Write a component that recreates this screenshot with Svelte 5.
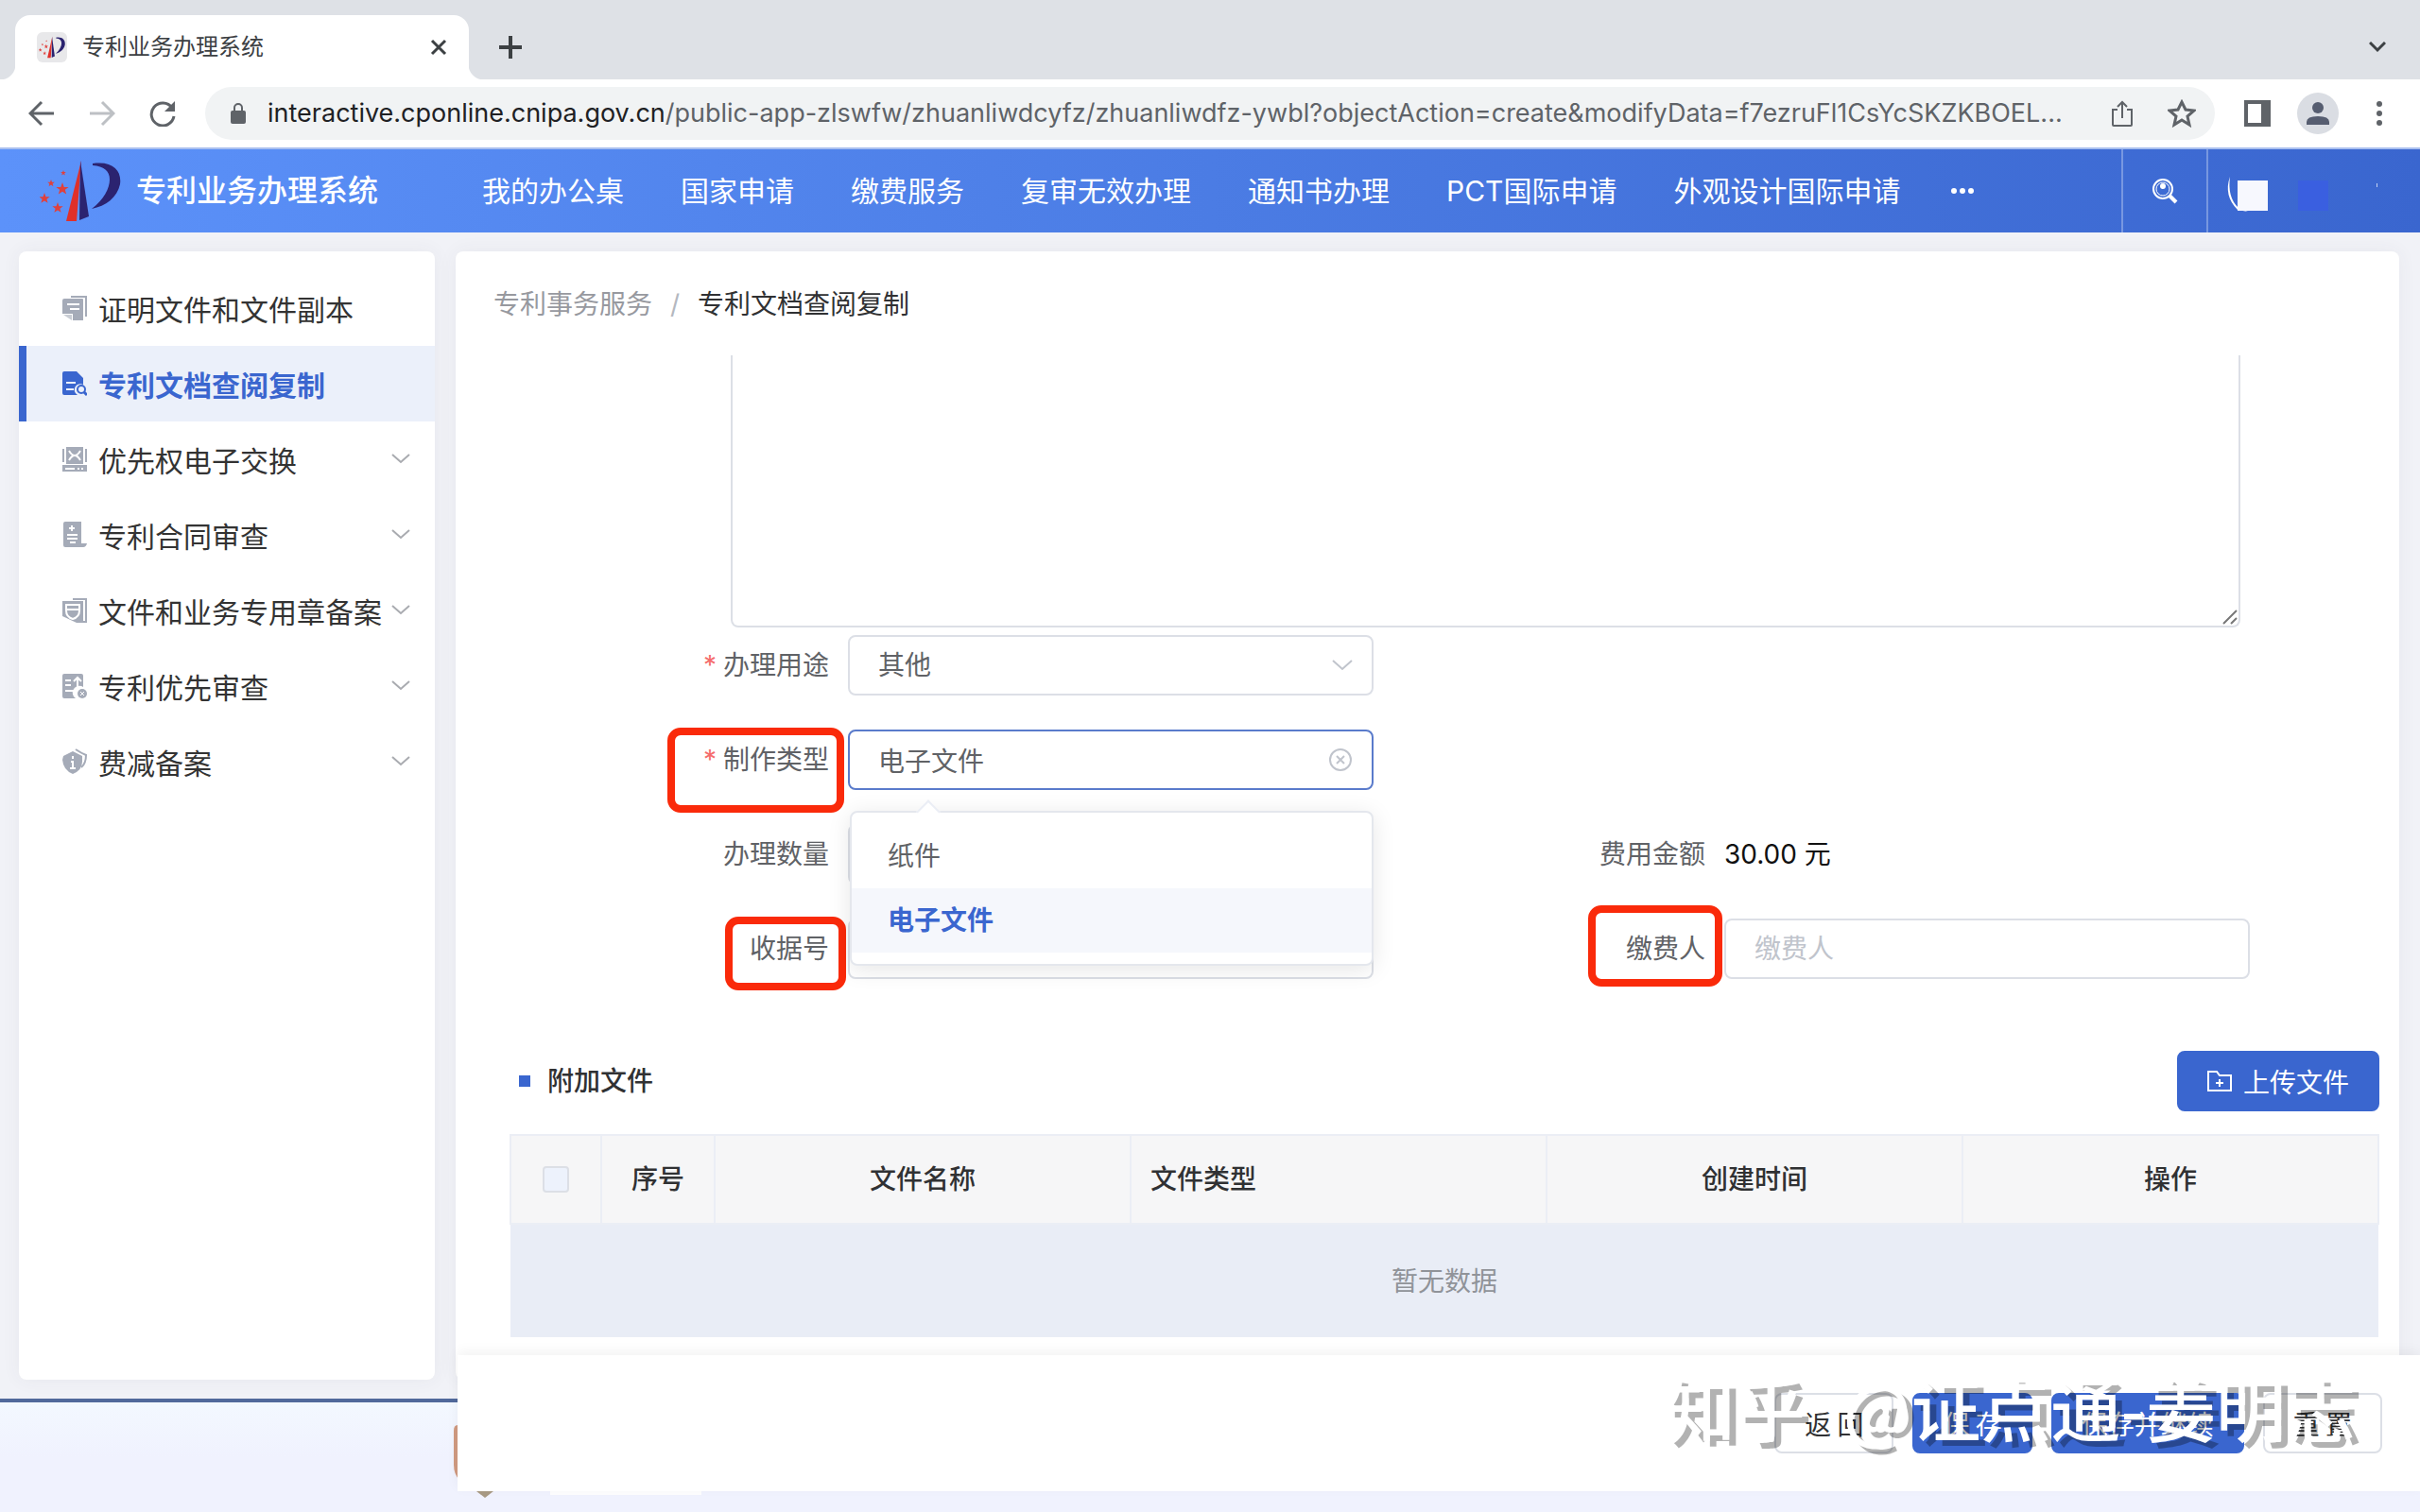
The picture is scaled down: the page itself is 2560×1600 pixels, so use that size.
<script>
  const navItems = [
    "我的办公桌",
    "国家申请",
    "缴费服务",
    "复审无效办理",
    "通知书办理",
    "PCT国际申请",
    "外观设计国际申请",
  ];

  const menuItems = [
    { icon: "copies", label: "证明文件和文件副本", children: false },
    { icon: "search", label: "专利文档查阅复制", children: false },
    { icon: "exchange", label: "优先权电子交换", children: true },
    { icon: "contract", label: "专利合同审查", children: true },
    { icon: "seal", label: "文件和业务专用章备案", children: true },
    { icon: "priority", label: "专利优先审查", children: true },
    { icon: "fee", label: "费减备案", children: true },
  ];

  const makeTypes = ["纸件", "电子文件"];

  // centre x, centre y, scale of each star in the emblem
  const stars = [
    [5, 42, 6],
    [24, 32, 7],
    [19, 52, 6],
    [12, 26, 4],
    [25, 15, 3],
  ];

  let activeMenu = $state("专利文档查阅复制");
  let remark = $state("");
  let purpose = $state("其他");
  let makeType = $state("电子文件");
  let dropdownOpen = $state(true);
  let quantity = $state("1");
  let receiptNo = $state("");
  let payer = $state("");

  function pickType(type) {
    makeType = type;
    dropdownOpen = false;
  }
</script>

{#snippet emblem()}
  <path d="M44 2 L28 66 L39 66 Z" fill="#e0302a" />
  <path d="M43 2 L42 65 L52 61 Z" fill="#2b2370" />
  <path d="M56 5 C78 2 87 13 85 27 C82 41 70 50 55 53 C68 43 74 31 74 22 C74 13 68 8 56 7 Z" fill="#2b2370" />
  {#each stars as [x, y, size]}
    <path transform="translate({x} {y}) scale({size})" d="M0-1L.25-.3.95-.3.4.12.6.8 0 .4-.6.8-.4.12-.95-.3-.25-.3z" fill="#e0403c" />
  {/each}
{/snippet}

{#snippet menuIcon(name)}
  <svg class="menu-icon" viewBox="0 0 26 28" aria-hidden="true">
    {#if name === "copies"}
      <path d="M9 1h17v22h-2V3H9z" fill="currentColor" />
      <path d="M2 4h19a1 1 0 0 1 1 1v22H11V20H0V6a2 2 0 0 1 2-2z" fill="currentColor" />
      <path d="M1 21l9 6v-6z" fill="currentColor" opacity="0.6" />
      <path d="M5 10h13M8 15h10" stroke="#fff" stroke-width="2" />
    {:else if name === "search"}
      <path d="M2 1h13l7 7v7a6 6 0 0 0-6 11H2a2 2 0 0 1-2-2V3a2 2 0 0 1 2-2z" fill="currentColor" />
      <path d="M4 13h10M4 20h8" stroke="#ebf0fa" stroke-width="2" />
      <circle cx="20" cy="20" r="4" fill="#ebf0fa" stroke="currentColor" stroke-width="2" />
      <path d="M23 23l3 3" stroke="currentColor" stroke-width="3" />
    {:else if name === "exchange"}
      <path d="M4 1h18v18H4z" fill="currentColor" />
      <path d="M1 3v14M25 3v14" stroke="currentColor" stroke-width="2" />
      <path d="M7 5q6 10 12 0M7 15q6-10 12 0" stroke="#fff" stroke-width="2" fill="none" />
      <path d="M0 20h26v7H0z" fill="currentColor" />
      <path d="M3 24h10M16 24h2M20 24h2" stroke="#fff" stroke-width="2" />
    {:else if name === "contract"}
      <path d="M3 0h17v23h6q-1 4-4 4H3a2 2 0 0 1-2-2V2a2 2 0 0 1 2-2z" fill="currentColor" />
      <path d="M10 4v6M7 7h6M5 14h11M5 18h11M8 22h6" stroke="#fff" stroke-width="2" />
    {:else if name === "seal"}
      <path d="M11 1h15v26h-5v-2h3V3H11z" fill="currentColor" />
      <path d="M0 4h22v23h-7L0 20z" fill="currentColor" />
      <path d="M4 8h14v6q0 7-7 9-7-2-7-9zM5 13h12" stroke="#fff" stroke-width="2" fill="none" />
    {:else if name === "priority"}
      <path d="M2 1h18a2 2 0 0 1 2 2v12a7 7 0 0 0-8 12H2a2 2 0 0 1-2-2V3a2 2 0 0 1 2-2z" fill="currentColor" />
      <path d="M3 8h6M3 13h6M3 19h9M16 15V5M12 9l4-4 4 4" stroke="#fff" stroke-width="2" fill="none" />
      <circle cx="21" cy="22" r="5" fill="currentColor" />
      <path d="M19 20l4 4M23 20l-4 4" stroke="#fff" />
    {:else}
      <path d="M11 3l10 5v6q0 9-10 13Q1 23 0 12l1-4z" fill="currentColor" />
      <path d="M14 1q6 4 11 6 0 9-5 13" stroke="currentColor" stroke-width="2" fill="none" />
      <path d="M11 8v3M11 13v8M9 14h2M8 21h6" stroke="#fff" stroke-width="2" />
    {/if}
  </svg>
{/snippet}

<div class="window">
  <div class="tab-strip">
    <div class="tab">
      <svg class="favicon" viewBox="0 0 32 32" aria-hidden="true">
        <rect width="32" height="32" rx="6" fill="#e8e8ea" />
        <svg x="2" y="4" width="28" height="24" viewBox="0 0 86 68" preserveAspectRatio="none">{@render emblem()}</svg>
      </svg>
      <span class="tab-title">专利业务办理系统</span>
      <button class="plain" aria-label="关闭标签页">
        <svg width="18" height="18" viewBox="0 0 18 18"><path d="M2 2l14 14M16 2L2 16" stroke="#3c4043" stroke-width="3" /></svg>
      </button>
    </div>
    <button class="plain new-tab" aria-label="新标签页">
      <svg width="24" height="24" viewBox="0 0 24 24"><path d="M12 0v24M0 12h24" stroke="#3c4043" stroke-width="4" /></svg>
    </button>
    <button class="plain tab-search" aria-label="搜索标签页">
      <svg width="18" height="12" viewBox="0 0 18 12"><path d="M1 1l8 8 8-8" stroke="#3c4043" stroke-width="3" fill="none" /></svg>
    </button>
  </div>

  <div class="toolbar">
    <div class="nav-buttons">
      <button class="plain" aria-label="后退">
        <svg width="28" height="28" viewBox="0 0 28 28"><path d="M27 14H3M14 2L2 14l12 12" stroke="#5f6368" stroke-width="3" fill="none" /></svg>
      </button>
      <button class="plain" aria-label="前进">
        <svg width="28" height="28" viewBox="0 0 28 28"><path d="M1 14h24M14 2l12 12-12 12" stroke="#bdc0c4" stroke-width="3" fill="none" /></svg>
      </button>
      <button class="plain" aria-label="重新加载">
        <svg width="28" height="28" viewBox="0 0 28 28">
          <path d="M24 8A12 12 0 1 0 26 17" stroke="#5f6368" stroke-width="3" fill="none" />
          <path d="M27 1v11H16z" fill="#5f6368" />
        </svg>
      </button>
    </div>
    <div class="omnibox">
      <svg width="18" height="24" viewBox="0 0 18 24" aria-hidden="true">
        <rect x="1" y="9" width="16" height="14" rx="2" fill="#5f6368" />
        <path d="M5 10V6a4 4 0 0 1 8 0v4" stroke="#5f6368" stroke-width="2" fill="none" />
      </svg>
      <span class="url"><b>interactive.cponline.cnipa.gov.cn</b>/public-app-zlswfw/zhuanliwdcyfz/zhuanliwdfz-ywbl?objectAction=create&modifyData=f7ezruFl1CsYcSKZKBOEL...</span>
      <button class="plain" aria-label="分享">
        <svg width="24" height="30" viewBox="0 0 24 30">
          <path d="M7 11H2v16q0 1 1 1h18q1 0 1-1V11h-5M12 20V3M7 8l5-5 5 5" stroke="#5f6368" stroke-width="2" fill="none" />
        </svg>
      </button>
      <button class="plain" aria-label="添加书签">
        <svg width="30" height="30" viewBox="0 0 30 30">
          <path d="M15 3l4 8 9 1-7 6 2 9-8-5-8 5 2-9-7-6 9-1z" stroke="#5f6368" stroke-width="3" fill="none" />
        </svg>
      </button>
    </div>
    <div class="tools">
      <button class="plain" aria-label="侧边栏">
        <svg width="28" height="28" viewBox="0 0 28 28"><path d="M0 0h28v28H0zM4 4v20h14V4z" fill="#5f6368" fill-rule="evenodd" /></svg>
      </button>
      <button class="plain" aria-label="个人资料">
        <svg width="44" height="44" viewBox="0 0 44 44">
          <circle cx="22" cy="22" r="22" fill="#dadde3" />
          <circle cx="22" cy="16" r="6" fill="#565d70" />
          <path d="M10 34v-3q0-6 12-6t12 6v3z" fill="#565d70" />
        </svg>
      </button>
      <button class="plain" aria-label="更多">
        <svg width="6" height="28" viewBox="0 0 6 28"><g fill="#5f6368"><circle cx="3" cy="4" r="3" /><circle cx="3" cy="14" r="3" /><circle cx="3" cy="24" r="3" /></g></svg>
      </button>
    </div>
  </div>

  <header class="site-header">
    <svg class="logo" viewBox="0 0 86 68" aria-hidden="true">{@render emblem()}</svg>
    <span class="site-name">专利业务办理系统</span>
    <nav>
      {#each navItems as item}
        <a href="#nav">{item}</a>
      {/each}
      <button class="plain" aria-label="更多菜单">
        <svg width="28" height="8" viewBox="0 0 28 8"><g fill="#fff"><circle cx="5" cy="4" r="3" /><circle cx="14" cy="4" r="3" /><circle cx="23" cy="4" r="3" /></g></svg>
      </button>
    </nav>
    <button class="plain header-search" aria-label="搜索">
      <svg width="30" height="30" viewBox="0 0 30 30">
        <circle cx="13" cy="13" r="10" stroke="#fff" stroke-width="2" fill="none" />
        <circle cx="13" cy="13" r="7" stroke="#fff" fill="none" />
        <circle cx="13" cy="10" r="3" fill="#fff" />
        <path d="M20 20l7 7" stroke="#fff" stroke-width="4" />
      </svg>
    </button>
    <div class="account">
      <svg width="180" height="46" viewBox="0 0 180 46" aria-hidden="true">
        <path d="M9 8Q2 28 17 43L28 45L18 41Q6 30 9 8z" fill="#fff" />
        <rect x="17" y="12" width="32" height="32" fill="#f7f8fe" />
        <rect x="81" y="12" width="32" height="32" fill="#3a5fe0" />
        <rect x="164" y="15" width="1" height="4" fill="#c5d2f2" />
      </svg>
    </div>
  </header>

  <div class="body">
    <aside>
      {#each menuItems as item}
        <button class="menu-item" class:active={activeMenu === item.label} onclick={() => (activeMenu = item.label)}>
          {@render menuIcon(item.icon)}
          <span class="menu-label">{item.label}</span>
          {#if item.children}
            <svg class="chevron" width="20" height="12" viewBox="0 0 20 12"><path d="M1 1l9 8 9-8" stroke="#a9abb0" stroke-width="2" fill="none" /></svg>
          {/if}
        </button>
      {/each}
    </aside>

    <main>
      <div class="breadcrumb">
        <a href="#service">专利事务服务</a>
        <span class="slash">/</span>
        <span>专利文档查阅复制</span>
      </div>

      <div class="remark">
        <textarea bind:value={remark} aria-label="备注"></textarea>
        <svg class="grip" width="16" height="16" viewBox="0 0 16 16"><path d="M1 15L15 1M9 15l6-6" stroke="#777" stroke-width="2" /></svg>
      </div>

      <form class="form" onsubmit={(e) => e.preventDefault()}>
        <label class="label" for="purpose"><span class="required">办理用途</span></label>
        <div class="control">
          <select id="purpose" bind:value={purpose}>
            <option>其他</option>
          </select>
          <svg class="suffix" width="22" height="22" viewBox="0 0 22 22"><path d="M1 6l10 9 10-9" stroke="#c0c4cc" stroke-width="2" fill="none" /></svg>
        </div>
        <span></span>
        <span></span>

        <label class="label" for="make-type"><span class="required">制作类型<i class="mark mark-type"></i></span></label>
        <div class="control">
          <input id="make-type" class="focused" type="text" readonly value={makeType} onclick={() => (dropdownOpen = !dropdownOpen)} />
          <button type="button" class="plain suffix" aria-label="清空" onclick={() => (makeType = "")}>
            <svg width="26" height="26" viewBox="0 0 26 26"><g stroke="#c0c4cc" stroke-width="2" fill="none"><circle cx="13" cy="13" r="11" /><path d="M9 9l8 8M17 9l-8 8" /></g></svg>
          </button>
          {#if dropdownOpen}
            <div class="dropdown">
              {#each makeTypes as type}
                <button type="button" class:selected={makeType === type} onclick={() => pickType(type)}>{type}</button>
              {/each}
            </div>
          {/if}
        </div>
        <span></span>
        <span></span>

        <label class="label" for="quantity">办理数量</label>
        <div class="control"><input id="quantity" type="text" bind:value={quantity} /></div>
        <span class="label">费用金额</span>
        <span class="amount">30.00 元</span>

        <label class="label" for="receipt"><span>收据号<i class="mark mark-receipt"></i></span></label>
        <div class="control"><input id="receipt" type="text" bind:value={receiptNo} /></div>
        <label class="label" for="payer"><span>缴费人<i class="mark mark-payer"></i></span></label>
        <div class="control"><input id="payer" type="text" placeholder="缴费人" bind:value={payer} /></div>
      </form>

      <section class="files">
        <div class="files-head">
          <h2>附加文件</h2>
          <button class="btn primary upload">
            <svg width="26" height="24" viewBox="0 0 26 24"><path d="M1 2h9l3 4h12v16H1zM13 10v8M9 14h8" stroke="#fff" stroke-width="2" fill="none" /></svg>
            上传文件
          </button>
        </div>
        <table>
          <thead>
            <tr>
              <th class="check"><input type="checkbox" aria-label="全选" /></th>
              <th class="index">序号</th>
              <th>文件名称</th>
              <th class="left">文件类型</th>
              <th>创建时间</th>
              <th>操作</th>
            </tr>
          </thead>
          <tbody>
            <tr><td colspan="6">暂无数据</td></tr>
          </tbody>
        </table>
      </section>
    </main>
  </div>

  <footer class="site-footer">
    <svg width="270" height="86" viewBox="0 0 270 86" aria-hidden="true">
      <path d="M12 8Q8 8 8 14V50Q8 60 14 66V8z" fill="#d09a80" />
      <path d="M32 78h18l-9 7z" fill="#a89a84" />
      <rect x="110" y="70" width="160" height="12" fill="#fdfdfe" />
    </svg>
  </footer>

  <div class="actions">
    <button class="btn">返 回</button>
    <button class="btn primary">保 存</button>
    <button class="btn primary">保存并继续</button>
    <button class="btn">重 置</button>
    <div class="watermark"><span>知乎</span><span>@证点通-姜明志</span></div>
  </div>
</div>

<style>
  :global(body) {
    margin: 0;
    background: #f1f2f7;
  }

  .window {
    position: relative;
    display: flex;
    flex-direction: column;
    min-height: 100vh;
    font-family: Inter, "Noto Sans CJK SC", sans-serif;
    font-size: 28px;
    line-height: 40px;
    color: #606266;
  }

  .window * { box-sizing: border-box; }

  button, input, select, textarea {
    font: inherit;
    color: inherit;
  }

  button { cursor: pointer; }
  svg { display: block; flex: none; }
  a { color: inherit; text-decoration: none; }

  .plain {
    display: flex;
    padding: 0;
    border: 0;
    background: none;
  }

  /* browser chrome */
  .tab-strip {
    display: flex;
    align-items: center;
    height: 84px;
    padding: 16px 36px 0 16px;
    background: #dee1e6;
  }

  .tab {
    position: relative;
    display: flex;
    align-items: center;
    gap: 16px;
    width: 480px;
    height: 68px;
    padding: 0 23px;
    border-radius: 16px 16px 0 0;
    background: #fff;
  }

  .tab::before, .tab::after {
    content: "";
    position: absolute;
    bottom: 0;
    width: 16px;
    height: 16px;
  }

  .tab::before {
    right: 100%;
    background: radial-gradient(circle at 0 0, #dee1e6 16px, #fff 17px);
  }

  .tab::after {
    left: 100%;
    background: radial-gradient(circle at 100% 0, #dee1e6 16px, #fff 17px);
  }

  .favicon {
    width: 32px;
    height: 32px;
  }

  .tab-title {
    flex: 1;
    font-size: 24px;
    color: #3c4043;
  }

  .new-tab { margin-left: 32px; }
  .tab-search { margin-left: auto; }

  .toolbar {
    display: flex;
    align-items: center;
    height: 74px;
    padding: 0 40px 0 30px;
    border-bottom: 2px solid #a9bfef;
    background: #fff;
  }

  .nav-buttons {
    display: flex;
    gap: 36px;
    width: 187px;
  }

  .omnibox {
    display: flex;
    flex: 1;
    align-items: center;
    min-width: 0;
    height: 56px;
    padding: 0 20px 0 26px;
    border-radius: 28px;
    background: #f1f3f4;
  }

  .url {
    flex: 1;
    overflow: hidden;
    padding-left: 22px;
    font-size: 27px;
    white-space: nowrap;
    color: #5f6368;
  }

  .url b {
    font-weight: 400;
    color: #202124;
  }

  .omnibox button { margin-left: 36px; }

  .tools {
    display: flex;
    align-items: center;
    gap: 28px;
    margin-left: 31px;
  }

  .tools button:last-child { margin-left: 12px; }

  /* site header */
  .site-header {
    display: flex;
    align-items: center;
    height: 88px;
    padding-left: 42px;
    background: linear-gradient(90deg, #5c92fa, #4b7ce4 50%, #3a66cf);
    color: #fff;
  }

  .logo {
    width: 86px;
    height: 68px;
  }

  .site-name {
    margin-left: 16px;
    font-size: 32px;
    font-weight: 500;
  }

  nav {
    display: flex;
    flex: 1;
    align-items: center;
    gap: 60px;
    margin-left: 110px;
    font-size: 30px;
    white-space: nowrap;
  }

  nav button { margin-left: -8px; }

  .header-search {
    align-items: center;
    justify-content: center;
    width: 92px;
    height: 100%;
    border: solid rgba(255, 255, 255, 0.3);
    border-width: 0 2px;
  }

  .account {
    width: 224px;
    padding: 0 14px;
  }

  /* layout */
  .body {
    display: grid;
    flex: 1;
    grid-template-columns: 440px 1fr;
    gap: 22px;
    padding: 20px 22px 20px 20px;
  }

  aside, main {
    min-width: 0;
    border-radius: 8px;
    background: #fff;
    box-shadow: 0 0 20px rgba(60, 60, 90, 0.06);
  }

  aside { padding: 20px 0; }

  .menu-item {
    display: flex;
    align-items: center;
    width: 100%;
    height: 80px;
    padding: 0 26px 0 38px;
    border: 0;
    border-left: 8px solid transparent;
    background: none;
    font-size: 30px;
    text-align: left;
    white-space: nowrap;
    color: #333;
  }

  .menu-item.active {
    border-color: #3a66cf;
    background: #ebf0fa;
    font-weight: 700;
    color: #3a66cf;
  }

  .menu-icon {
    width: 26px;
    height: 28px;
    color: #a5abb8;
  }

  .active .menu-icon { color: #3a66cf; }

  .menu-label {
    flex: 1;
    margin-left: 12px;
    padding-top: 4px;
  }

  .breadcrumb {
    display: flex;
    align-items: center;
    height: 110px;
    padding: 2px 40px 0;
    color: #303133;
  }

  .breadcrumb a { color: #97999f; }

  .slash {
    width: 48px;
    text-align: center;
    color: #b4b8c0;
  }

  .remark {
    position: relative;
    margin: 0 168px 8px 291px;
  }

  textarea {
    display: block;
    width: 100%;
    height: 288px;
    padding: 10px 30px;
    border: 2px solid #dcdfe6;
    border-top: 0;
    border-radius: 0 0 8px 8px;
    outline: none;
    resize: none;
  }

  .grip {
    position: absolute;
    right: 3px;
    bottom: 3px;
  }

  .form {
    display: grid;
    grid-template-columns: 357px 1fr 371px 1fr;
    grid-auto-rows: 64px;
    row-gap: 36px;
    padding: 0 158px 0 58px;
  }

  .label {
    justify-self: end;
    padding-right: 20px;
    line-height: 64px;
  }

  .label span {
    position: relative;
    display: block;
  }

  .required::before {
    content: "*";
    margin-right: 7px;
    color: #f56c6c;
  }

  .control { position: relative; }

  .control input, select {
    display: block;
    width: 100%;
    height: 64px;
    padding: 0 60px 0 30px;
    border: 2px solid #dcdfe6;
    border-radius: 8px;
    outline: none;
    appearance: none;
    background: #fff;
    color: #606266;
  }

  .control input::placeholder { color: #c0c4cc; }
  .control input.focused { border-color: #5a7bcb; }

  .suffix {
    position: absolute;
    top: 0;
    right: 22px;
    align-items: center;
    height: 64px;
  }

  .amount {
    line-height: 64px;
    color: #111;
  }

  .dropdown {
    position: absolute;
    z-index: 2;
    top: 86px;
    left: 2px;
    right: 0;
    padding: 12px 0;
    border: 2px solid #e4e7ed;
    border-radius: 8px;
    background: #fff;
    box-shadow: 0 4px 24px rgba(0, 0, 0, 0.1);
  }

  .dropdown::before {
    content: "";
    position: absolute;
    top: -10px;
    left: 72px;
    width: 16px;
    height: 16px;
    border: solid #ebeef5;
    border-width: 2px 0 0 2px;
    background: #fff;
    transform: rotate(45deg);
  }

  .dropdown button {
    position: relative;
    display: block;
    width: 100%;
    height: 68px;
    padding: 0 38px;
    border: 0;
    background: none;
    text-align: left;
  }

  .dropdown .selected {
    background: #f5f7fc;
    font-weight: 700;
    color: #3a66cf;
  }

  .mark {
    position: absolute;
    border: 8px solid #fa2a0a;
    border-radius: 14px;
    pointer-events: none;
  }

  .mark-type { inset: -2px -16px -24px -38px; }
  .mark-receipt { inset: -2px -18px -12px -26px; }
  .mark-payer { inset: -14px -18px -8px -40px; }

  .files { padding: 76px 21px 40px 57px; }

  .files-head {
    display: flex;
    align-items: center;
    justify-content: space-between;
    margin-bottom: 24px;
  }

  h2 {
    display: flex;
    align-items: center;
    gap: 18px;
    margin: 0 0 0 10px;
    font-size: 28px;
    font-weight: 500;
    color: #303133;
  }

  h2::before {
    content: "";
    width: 12px;
    height: 12px;
    background: #3a66cf;
  }

  .btn {
    height: 64px;
    padding: 0 30px;
    border: 2px solid #dcdfe6;
    border-radius: 8px;
    background: #fff;
    font-family: "Noto Sans CJK SC", sans-serif;
    white-space: nowrap;
    color: #303133;
  }

  .btn.primary {
    border-color: #3a66cf;
    background: #3a66cf;
    color: #fff;
  }

  .upload {
    display: flex;
    align-items: center;
    gap: 12px;
  }

  table {
    width: 100%;
    table-layout: fixed;
    border-collapse: collapse;
  }

  th {
    height: 94px;
    padding: 0 20px;
    border: 2px solid #ebeef5;
    background: #f6f6f7;
    font-weight: 500;
    color: #303133;
  }

  .check { width: 96px; }
  .index { width: 120px; }
  .left { text-align: left; }

  .check input {
    display: block;
    width: 28px;
    height: 28px;
    margin: 0 auto;
    border: 2px solid #dcdfe6;
    border-radius: 4px;
    appearance: none;
    background: #edf2fc;
  }

  td {
    height: 120px;
    padding: 0;
    background: #e9edf6;
    text-align: center;
    color: #909399;
  }

  .site-footer {
    height: 120px;
    padding-left: 472px;
    border-top: 4px solid #51699b;
    background: linear-gradient(#f3f8ff, #f0f2fe 50%);
  }

  .site-footer svg { margin-top: 16px; }

  .actions {
    position: absolute;
    right: 0;
    bottom: 22px;
    left: 484px;
    display: flex;
    justify-content: flex-end;
    gap: 20px;
    height: 144px;
    padding: 40px;
    background: #fff;
    box-shadow: 0 -4px 12px rgba(0, 0, 0, 0.05);
  }

  .watermark {
    position: absolute;
    top: 10px;
    right: 68px;
    display: flex;
    gap: 40px;
    font-family: "Noto Sans CJK SC", sans-serif;
    font-size: 74px;
    font-weight: 500;
    line-height: 88px;
    white-space: nowrap;
    color: #fff;
    text-shadow: 7px 6px 0 rgba(0, 0, 0, 0.3);
    pointer-events: none;
  }
</style>
